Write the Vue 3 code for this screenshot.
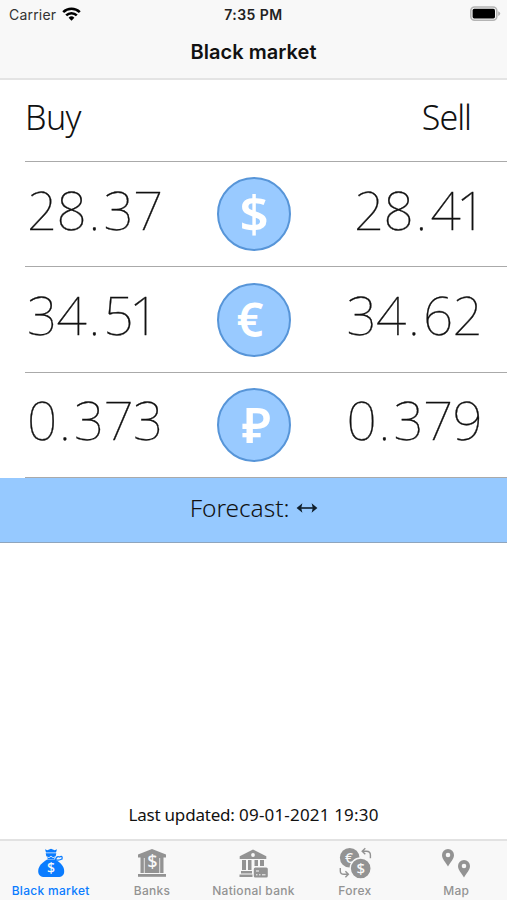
<script setup>
const rates = [
  { code: 'usd', sign: '$', buy: '28.37', sell: '28.41' },
  { code: 'eur', sign: '€', buy: '34.51', sell: '34.62' },
  { code: 'rub', sign: '₽', buy: '0.373', sell: '0.379' },
]
const tabs = [
  { id: 'black', label: 'Black market', active: true },
  { id: 'banks', label: 'Banks' },
  { id: 'national', label: 'National bank' },
  { id: 'forex', label: 'Forex' },
  { id: 'map', label: 'Map' },
]
// Splits a rate so that the decimal point can carry its own spacing.
const parts = (v) => v.split('.')
</script>

<template>
  <div class="screen">
    <header class="top">
      <div class="status">
        <div class="carrier">
          <span class="carrier-name">Carrier</span>
          <svg class="wifi" width="19" height="14" viewBox="0 0 19 14">
            <g fill="none" stroke="#000" stroke-width="2.6">
              <path d="M1.2 5.1A12 12 0 0 1 17.8 5.1" />
              <path d="M4.2 8.4A7.6 7.6 0 0 1 14.8 8.4" />
            </g>
            <path d="M6.6 10.7A4.2 4.2 0 0 1 12.4 10.7L9.5 13.8Z" />
          </svg>
        </div>
        <span class="time">7:35 PM</span>
        <svg class="battery" width="31" height="16" viewBox="0 0 31 16">
          <rect x=".8" y="1" width="26" height="13.2" rx="3.8" fill="#f7f7f7" stroke="#b4b4b4" stroke-width="1.6" />
          <rect x="2.6" y="2.8" width="22.4" height="9.6" rx="1.6" />
          <path d="M28.2 5.2Q30.2 5.8 30.2 7.6T28.2 10Z" fill="#b0b0b0" />
        </svg>
      </div>
      <h1 class="title">Black market</h1>
    </header>

    <main class="content">
      <div class="heads"><span class="buy-head">Buy</span><span class="sell-head">Sell</span></div>
      <div v-for="r in rates" :key="r.code" class="rate">
        <span class="value">{{ parts(r.buy)[0] }}<span class="dot">.</span><span :class="{ tight: r.buy.endsWith('1') }">{{ parts(r.buy)[1] }}</span></span>
        <span class="coin" :class="r.code"><span class="coin-sign">{{ r.sign }}</span></span>
        <span class="value sell">{{ parts(r.sell)[0] }}<span class="dot">.</span><span :class="{ tight: r.sell.endsWith('1') }">{{ parts(r.sell)[1] }}</span></span>
      </div>
      <div class="forecast">
        <span>Forecast:</span>
        <svg width="22" height="12" viewBox="0 0 22 12">
          <path d="M2 6H20" stroke="#10202e" stroke-width="1.6" />
          <path d="M.6 6L6.4 1.2L5.2 6L6.4 10.8ZM21.4 6L15.6 1.2L16.8 6L15.6 10.8Z" fill="#10202e" />
        </svg>
      </div>
      <p class="updated"><span class="updated-label">Last updated:</span> <span class="updated-date">09-01-2021 19:30</span></p>
    </main>

    <nav class="tabs">
      <div v-for="t in tabs" :key="t.id" class="tab" :class="{ active: t.active }">
        <svg class="icon" width="34" height="32" viewBox="0 0 34 32">
          <g v-if="t.id === 'black'" fill="currentColor">
            <path d="M11 2.2L13.3 3.3L17 1.8L20.7 3.3L23 2.2L22 5.6H12Z" />
            <path d="M11.7 6.3H22.3L21.7 9.3L19 10.2L17 8.8L15 10.2L12.3 9.3Z" />
            <path d="M13 10.3L15 11.1L17 9.8L19 11.1L21 10.3L20 12.2H14Z" />
            <path d="M13.2 12.6H21.2C26 15.4 30.2 19.3 30.2 24C30.2 28 28 30 24 30H10.6C6.6 30 4.2 28 4.2 24C4.2 19 8.8 15.2 13.2 12.6Z" />
            <path d="M21.5 12.5Q23 8.4 25.5 10Q28.8 8.2 28 12Q25.5 13.4 22.6 12.9Z" fill="none" stroke="currentColor" stroke-width="1.3" />
            <text x="17" y="26.2" class="sign" font-size="14">$</text>
          </g>
          <g v-else-if="t.id === 'banks'" fill="currentColor">
            <path d="M17 2L31 7.6V10.6H3V7.6Z" />
            <path d="M5.5 10H28.5V26H5.5Z" />
            <path d="M3 27H31V29.8H3Z" />
            <path d="M9.3 11V26M24.7 11V26" stroke="#f8f8f8" stroke-width=".8" />
            <text x="17.5" y="21.2" class="sign" font-size="18">$</text>
          </g>
          <g v-else-if="t.id === 'national'" fill="currentColor">
            <path d="M17 2.6L30.3 9.3V12H3.7V9.3Z" />
            <circle cx="17" cy="8" r="1.9" fill="#f8f8f8" />
            <path d="M6 13H10V23H6ZM12 13H15.5V23H12ZM18.5 13H22V19H18.5ZM24 13H28V19H24ZM5 24H16V26.6H5ZM3.5 27.5H16.5V30H3.5Z" />
            <rect x="17.8" y="20.5" width="14" height="10" rx="1.5" />
            <path d="M20 24H23M20 27.8H21.5M23 27.8H24.5M26 27.8H29.5" stroke="#f8f8f8" />
          </g>
          <g v-else-if="t.id === 'forex'" fill="currentColor">
            <circle cx="11.7" cy="10.7" r="9.8" />
            <text x="11" y="15.7" class="sign" font-size="14">€</text>
            <circle cx="22.7" cy="21.5" r="10.5" stroke="#f8f8f8" stroke-width="1.4" />
            <text x="22.7" y="27" class="sign" font-size="15">$</text>
            <g fill="none" stroke="currentColor" stroke-width="1.4">
              <path d="M32.4 11.3V8Q32.4 4.2 28.5 4.2H24.3M27.3 1.2L24.2 4.2L27.3 7.2" />
              <path d="M2.3 21V24Q2.3 27.3 6 27.3H10.2M7.4 24.2L10.4 27.3L7.4 30.3" />
            </g>
          </g>
          <g v-else fill="currentColor" fill-rule="evenodd">
            <path d="M9 2A6 6 0 0 0 3 8C3 12 6.6 15.3 9 19.4C11.4 15.3 15 12 15 8A6 6 0 0 0 9 2ZM9 5.7A2.3 2.3 0 1 1 9 10.3A2.3 2.3 0 1 1 9 5.7Z" />
            <path d="M25 13A6 6 0 0 0 19 19C19 23 22.6 26.3 25 30.4C27.4 26.3 31 23 31 19A6 6 0 0 0 25 13ZM25 16.7A2.3 2.3 0 1 1 25 21.3A2.3 2.3 0 1 1 25 16.7Z" />
          </g>
        </svg>
        <span class="label">{{ t.label }}</span>
      </div>
    </nav>
  </div>
</template>

<style>
body { margin: 0; background: #fff; }
</style>

<style scoped>
.screen { width: 507px; height: 900px; display: flex; flex-direction: column; background: #fff; color: #111; font-family: "Noto Sans", sans-serif; overflow: hidden; }
.top { height: 80px; box-sizing: border-box; background: #f8f8f8; border-bottom: 2px solid #e4e4e4; font-family: Inter, sans-serif; }
.status { height: 28px; display: grid; grid-template-columns: 1fr auto 1fr; align-items: center; padding: 0 6px; }
.carrier { display: flex; align-items: center; gap: 6px; padding-left: 3px; }
.carrier-name { font-size: 14px; letter-spacing: .2px; color: #333; }
.time { font-size: 14px; font-weight: 600; letter-spacing: .45px; color: #222; }
.battery { justify-self: end; }
.title { margin: 0; text-align: center; font-size: 20px; line-height: 48px; font-weight: 600; letter-spacing: .05px; }
.content { flex: 1; display: flex; flex-direction: column; }
.heads { height: 82px; box-sizing: border-box; margin-left: 25px; padding: 0 36px 8px 0; border-bottom: 1px solid #aaa; display: flex; justify-content: space-between; align-items: center; font-size: 34px; font-weight: 300; letter-spacing: -.6px; }
.sell-head { letter-spacing: -1px; }
.rate { height: 105.4px; box-sizing: border-box; margin-left: 25px; padding: 0 25px 0 2px; border-bottom: 1px solid #aaa; display: grid; grid-template-columns: 1fr 75px 1fr; align-items: center; }
.value { font-size: 53px; line-height: 90px; font-weight: 100; -webkit-text-stroke: .3px #111; padding-bottom: 9px; letter-spacing: -.7px; white-space: nowrap; }
.value.sell { text-align: right; }
.dot { margin: 0 4px 0 2.5px; }
.tight { letter-spacing: -4.5px; }
.coin { width: 74px; height: 74px; box-sizing: border-box; border: 2px solid #5795d8; border-radius: 50%; background: #99caff; color: #fff; display: flex; align-items: center; justify-content: center; font-size: 50px; font-weight: 600; line-height: 1; }
.usd .coin-sign { padding-bottom: 4px; font-size: 51px; }
.eur .coin-sign { padding: 0 8px 1px 0; font-size: 47px; }
.rub .coin-sign { padding: 0 0 0 5px; font-size: 49px; }
.forecast { height: 65px; box-sizing: border-box; background: #96c9ff; border-bottom: 1px solid #8fa5bd; display: flex; align-items: center; justify-content: center; gap: 7px; padding: 0 0 5px 1px; font-size: 24.5px; font-weight: 300; letter-spacing: -.05px; }
.updated { margin: auto 0 12px; text-align: center; font-size: 17px; line-height: 24px; }
.updated-label { letter-spacing: -.2px; }
.updated-date { letter-spacing: .18px; }
.tabs { height: 61px; box-sizing: border-box; border-top: 2px solid #e2e2e2; background: #f8f8f8; display: grid; grid-template-columns: repeat(5, 1fr); font-family: Inter, sans-serif; }
.tab { display: flex; flex-direction: column; align-items: center; padding-top: 6px; color: #939393; }
.tab.active { color: #0a7cff; }
.icon { display: block; flex: none; }
.sign { fill: #f8f8f8; font-family: "Noto Sans", sans-serif; font-weight: 500; text-anchor: middle; }
.label { font-size: 12px; line-height: 16px; font-weight: 500; letter-spacing: .3px; white-space: nowrap; margin-top: 4px; }
</style>
